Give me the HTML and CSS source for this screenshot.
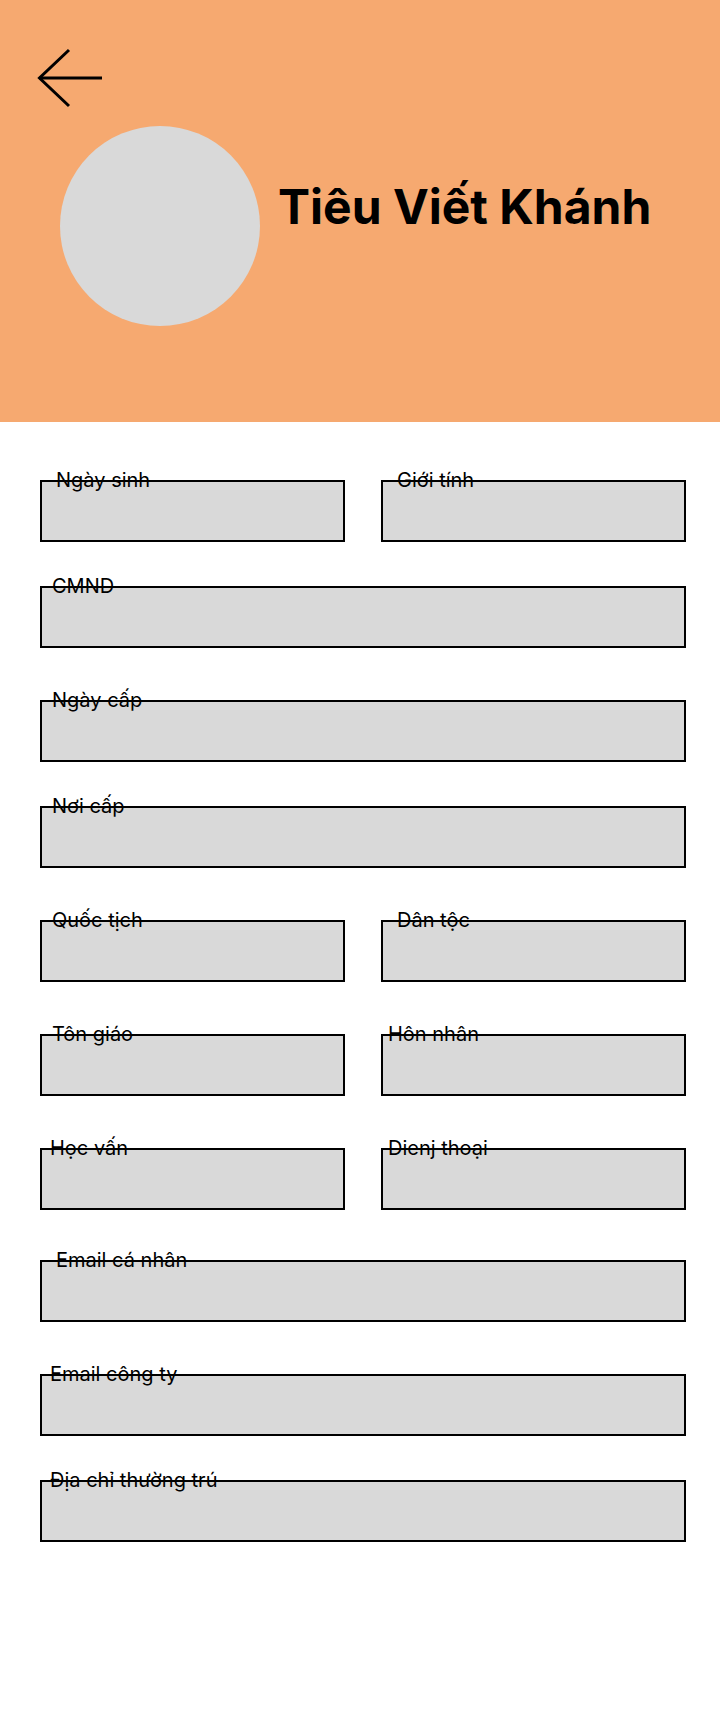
FILE: index.html
```html
<!DOCTYPE html>
<html lang="vi">
<head>
    <meta charset="UTF-8">
    <meta name="viewport" content="width=device-width, initial-scale=1.0">
    <title>Thông tin nhân viên</title>
    <link rel="stylesheet" href="styles.css">
</head>
<body>
    <header class="profile-header">
        <button class="back-btn" aria-label="Quay lại">
            <svg width="68" height="64" viewBox="0 0 68 64" fill="none" stroke="#000" stroke-width="3">
                <path d="M33 4 L3.5 32 L33 60"/>
                <path d="M3.5 32 H66"/>
            </svg>
        </button>
        <div class="profile-main">
            <div class="avatar"></div>
            <h1 class="profile-name">Tiêu Viết Khánh</h1>
        </div>
    </header>

    <main class="info">
        <div class="row pair">
            <div class="field">
                <label class="indent-lg">Ngày sinh</label>
                <div class="box"></div>
            </div>
            <div class="field">
                <label class="indent-lg">Giới tính</label>
                <div class="box"></div>
            </div>
        </div>

        <div class="row">
            <div class="field">
                <label>CMND</label>
                <div class="box"></div>
            </div>
        </div>

        <div class="row spaced">
            <div class="field">
                <label>Ngày cấp</label>
                <div class="box"></div>
            </div>
        </div>

        <div class="row">
            <div class="field">
                <label>Nơi cấp</label>
                <div class="box"></div>
            </div>
        </div>

        <div class="row pair spaced">
            <div class="field">
                <label>Quốc tịch</label>
                <div class="box"></div>
            </div>
            <div class="field">
                <label class="indent-lg">Dân tộc</label>
                <div class="box"></div>
            </div>
        </div>

        <div class="row pair spaced">
            <div class="field">
                <label>Tôn giáo</label>
                <div class="box"></div>
            </div>
            <div class="field">
                <label class="indent-xs">Hôn nhân</label>
                <div class="box"></div>
            </div>
        </div>

        <div class="row pair spaced">
            <div class="field">
                <label class="indent-sm">Học vấn</label>
                <div class="box"></div>
            </div>
            <div class="field">
                <label class="indent-xs">Dienj thoại</label>
                <div class="box"></div>
            </div>
        </div>

        <div class="row spaced-sm">
            <div class="field">
                <label class="indent-lg">Email cá nhân</label>
                <div class="box"></div>
            </div>
        </div>

        <div class="row spaced">
            <div class="field">
                <label class="indent-sm">Email công ty</label>
                <div class="box"></div>
            </div>
        </div>

        <div class="row">
            <div class="field">
                <label class="indent-sm">Địa chỉ thường trú</label>
                <div class="box"></div>
            </div>
        </div>
    </main>
</body>
</html>
```

FILE: styles.css
```css
* {
    margin: 0;
    padding: 0;
    box-sizing: border-box;
    font-family: Inter, "Noto Sans", Arial, sans-serif;
}

body {
    background-color: white;
    color: #000;
    min-height: 100vh;
}

.profile-header {
    background-color: #f6a970;
    height: 422px;
    padding: 46px 0 0 36px;
}

.back-btn {
    display: block;
    border: none;
    background: none;
    cursor: pointer;
    width: 68px;
    height: 64px;
}

.back-btn svg {
    display: block;
}

.profile-main {
    display: flex;
    align-items: flex-start;
    margin-top: 16px;
    padding-left: 24px;
}

.avatar {
    width: 200px;
    height: 200px;
    border-radius: 50%;
    background-color: #d9d9d9;
    flex-shrink: 0;
}

.profile-name {
    margin-left: 18px;
    margin-top: 52px;
    font-size: 48px;
    line-height: 58px;
    font-weight: 700;
    white-space: nowrap;
}

.info {
    display: flex;
    flex-direction: column;
    gap: 32px;
    padding: 46px 34px 0 40px;
}

.row.spaced {
    margin-top: 8px;
}

.row.spaced-sm {
    margin-top: 6px;
}

.row.pair {
    display: grid;
    grid-template-columns: 1fr 1fr;
    column-gap: 36px;
}

.field {
    display: flex;
    flex-direction: column;
}

.field label {
    position: relative;
    z-index: 1;
    font-size: 20px;
    line-height: 24px;
    margin-bottom: -12px;
    padding-left: 12px;
    white-space: nowrap;
}

.field label.indent-xs {
    padding-left: 7px;
}

.field label.indent-sm {
    padding-left: 10px;
}

.field label.indent-lg {
    padding-left: 16px;
}

.box {
    height: 62px;
    border: 2px solid #000;
    background-color: #d9d9d9;
}
```
